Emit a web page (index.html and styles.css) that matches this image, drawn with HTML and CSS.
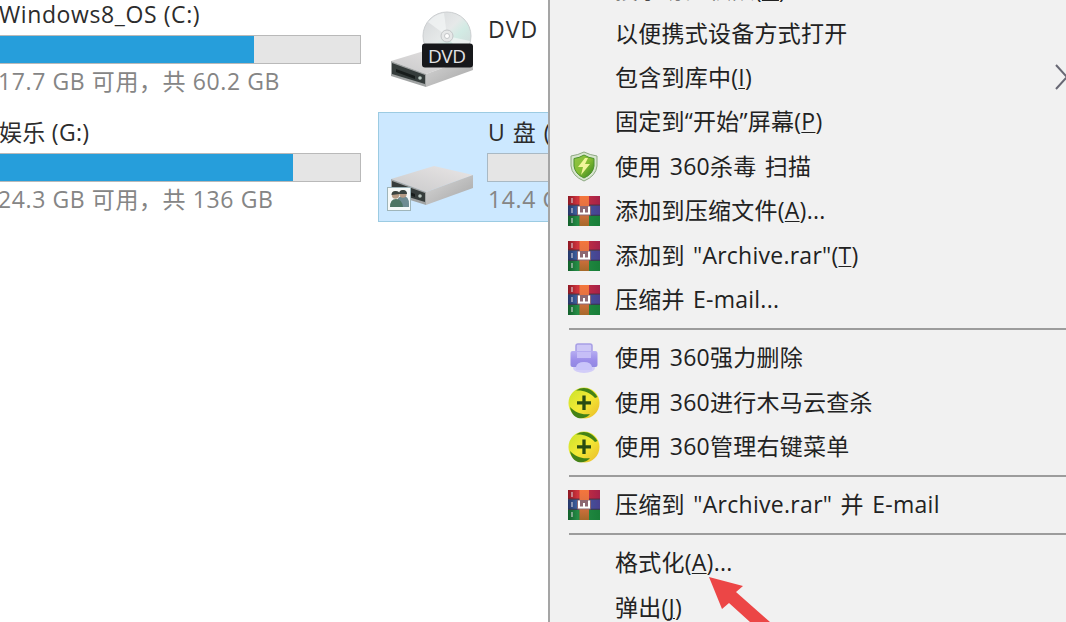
FILE: index.html
```html
<!DOCTYPE html>
<html lang="zh-CN">
<head>
	<meta charset="UTF-8">
	<title>此电脑</title>
	<link rel="stylesheet" href="styles.css">
</head>
<body>
	<!-- 公用图标 -->
	<svg class="defs" width="0" height="0">
		<defs>
			<linearGradient id="side" x1="0" y1="0" x2="1" y2="1">
				<stop offset="0" stop-color="#d8d8d8"/><stop offset="1" stop-color="#a5a5a5"/>
			</linearGradient>
			<linearGradient id="top" x1="0" y1="1" x2="1" y2="0">
				<stop offset="0" stop-color="#c9c9ca"/><stop offset="1" stop-color="#e9e6e6"/>
			</linearGradient>
			<linearGradient id="disc" x1="0" y1="0" x2="1" y2="1">
				<stop offset="0" stop-color="#d3d5d8"/><stop offset=".45" stop-color="#e6e9e9"/><stop offset=".6" stop-color="#d2ebe4"/><stop offset="1" stop-color="#d0d2d5"/>
			</linearGradient>
			<linearGradient id="red" x1="0" x2="1"><stop offset="0" stop-color="#8e1824"/><stop offset=".3" stop-color="#d0353d"/><stop offset="1" stop-color="#a52149"/></linearGradient>
			<linearGradient id="blue" x1="0" x2="1"><stop offset="0" stop-color="#253768"/><stop offset=".3" stop-color="#3f63a4"/><stop offset="1" stop-color="#49408f"/></linearGradient>
			<linearGradient id="green" x1="0" x2="1"><stop offset="0" stop-color="#12602b"/><stop offset=".3" stop-color="#258d46"/><stop offset="1" stop-color="#187e38"/></linearGradient>
			<linearGradient id="strap" x1="0" y1="0" x2="0" y2="1"><stop offset="0" stop-color="#f4763c"/><stop offset=".5" stop-color="#dd7043"/><stop offset="1" stop-color="#a5692a"/></linearGradient>
			<linearGradient id="shield" x1="0" x2="1" y2="1"><stop offset="0" stop-color="#8fc448"/><stop offset=".5" stop-color="#86bd32"/><stop offset="1" stop-color="#2f7f1d"/></linearGradient>
			<linearGradient id="ball" x1="0" x2="1" y2="1"><stop offset="0" stop-color="#c5e22b"/><stop offset=".5" stop-color="#f4ea35"/><stop offset="1" stop-color="#eab829"/></linearGradient>
			<linearGradient id="violet" x1="0" x2="0" y2="1"><stop offset="0" stop-color="#b7aef2"/><stop offset=".6" stop-color="#9a8ce9"/><stop offset="1" stop-color="#9188e2"/></linearGradient>
			<symbol id="drive" viewBox="0 0 82 40">
				<path d="M0 13 43 0 82 9 35 26z" fill="url(#top)"/>
				<path d="M35 26 82 9V22L35 39z" fill="url(#side)"/>
				<path d="M0 13 35 26V39L0 28z" fill="#a0a3a3"/>
				<path d="M1 15 34 27V36L1 26z" fill="#353c3b"/>
				<path d="M5 21 24 28v3L5 24z" fill="#171c1b"/>
				<circle cx="29" cy="30" r="1.8" fill="#b8c6c0"/>
			</symbol>
			<symbol id="rar" viewBox="0 0 32 30">
				<rect width="32" height="9.5" fill="url(#red)"/>
				<rect y="9.5" width="32" height="10" fill="url(#blue)"/>
				<rect y="19.5" width="32" height="10.5" fill="url(#green)"/>
				<path d="M0 9.2H32M0 19.3H32" stroke="#302c42" stroke-width="1"/>
				<path d="M4 2v5M4 12v5M4 22v5" stroke="#dfdbe0" stroke-width="1.3" opacity=".8"/>
				<rect x="11.5" width="9.5" height="30" fill="url(#strap)"/>
				<rect x="9" y="10" width="14" height="9.500" rx="1" fill="#8d6872"/>
				<path d="M11 10.500v8M21 10.500v8M16 13v5.500M11 17.500h10" fill="none" stroke="#fff" stroke-width="2"/>
			</symbol>
			<symbol id="safe" viewBox="0 0 32 32">
				<circle cx="16" cy="16" r="15.5" fill="url(#ball)"/>
				<path d="M8 3.5C15-1 24 .5 29.5 10L27 11C21 4.500 15 3 8 3.500z" fill="#438216"/>
				<path d="M2 20c6 6 12 8 20 7-3 4-8 5-12 4C6 29.500 3 26 2 20z" fill="#438216"/>
				<path d="M16 8.500V23M9 15.800h14" stroke="#294c12" stroke-width="3.300"/>
			</symbol>
		</defs>
	</svg>

	<div class="window">
		<div class="drives">
			<div class="drive">
				<p class="name name_c">Windows8_OS (C:)</p>
				<div class="bar"><div class="used" style="width:70.6%"></div></div>
				<p class="info">17.7 GB 可用，共 60.2 GB</p>
			</div>
			<div class="drive">
				<p class="name name_g">娱乐 (G:)</p>
				<div class="bar"><div class="used" style="width:81.3%"></div></div>
				<p class="info">24.3 GB 可用，共 136 GB</p>
			</div>
		</div>
		<div class="devices">
			<div class="device dvd">
				<svg class="pic" width="84" height="78" viewBox="0 0 84 78">
					<use href="#drive" y="37" width="82" height="40"/>
					<circle cx="56" cy="25" r="24" fill="url(#disc)" stroke="#cccfd1"/>
					<path d="M56 25 37 11Q44 3 53 2zM56 25 79 30Q77 38 70 44z" fill="#f4f6f6" opacity=".7"/>
					<circle cx="56" cy="25" r="6" fill="#e6e8e8" stroke="#c3c6c8"/>
					<circle cx="56" cy="25" r="2.500" fill="#fff" stroke="#c3c6c8"/>
					<rect x="31" y="32.500" width="51" height="24" rx="3" fill="#17181b"/>
					<text class="dvd_text" x="56" y="52" text-anchor="middle" textLength="38">DVD</text>
				</svg>
				<p class="name">DVD</p>
			</div>
			<div class="device usb">
				<svg class="pic" width="88" height="46" viewBox="0 0 88 46">
					<use href="#drive" x="4" width="82" height="40"/>
					<rect x=".5" y="21.500" width="23" height="23" fill="#f5f9f8" stroke="#9fb5ba"/>
					<path d="M10 37q0-7 6-7t6 8v3H10z" fill="#6f8c92"/>
					<path d="M3 41q0-8 6-8t7 8z" fill="#4d7563"/>
					<circle cx="8.500" cy="29" r="3.700" fill="#b59c86"/>
					<circle cx="16" cy="28" r="3.700" fill="#b59c86"/>
					<path d="M4.500 29q0-4 4-4t4 3zM12 28q0-4 4-4t4 4z" fill="#39433f"/>
				</svg>
				<div class="detail">
					<p class="name">U 盘 (H:)</p>
					<div class="bar"></div>
					<p class="info">14.4 GB</p>
				</div>
			</div>
		</div>
	</div>

	<!-- 右键菜单 -->
	<ul class="menu">
		<li class="first"><i></i><span>授予访问权限(<u>G</u>)</span></li>
		<li><i></i><span>以便携式设备方式打开</span></li>
		<li><i></i><span>包含到库中(<u>I</u>)</span><svg class="more" width="18" height="26" viewBox="0 0 18 26"><path d="M2 1 13 13 2 25"/></svg></li>
		<li><i></i><span>固定到“开始”屏幕(<u>P</u>)</span></li>
		<li>
			<i><svg width="30" height="31" viewBox="0 0 30 31">
				<path d="M15 1Q21 4 28 5V15Q27 25 15 30Q3 25 2 15V5Q9 4 15 1z" fill="#d9e6cf" stroke="#8ca881"/>
				<path d="M15 4Q20 7 25 7.500V15Q24 23 15 27Q6 23 5 15V7.500Q10 7 15 4z" fill="url(#shield)" stroke="#4f9230"/>
				<path d="M16 7 9 16h5l-2 8 9-11h-5l3-6z" fill="#f2f69b"/>
			</svg></i>
			<span>使用 360杀毒 扫描</span>
		</li>
		<li><i><svg width="32" height="30"><use href="#rar"/></svg></i><span>添加到压缩文件(<u>A</u>)...</span></li>
		<li><i><svg width="32" height="30"><use href="#rar"/></svg></i><span>添加到 "Archive.rar"(<u>T</u>)</span></li>
		<li><i><svg width="32" height="30"><use href="#rar"/></svg></i><span>压缩并 E-mail...</span></li>
		<li class="line"></li>
		<li>
			<i><svg width="30" height="31" viewBox="0 0 30 31">
				<ellipse cx="15" cy="25" rx="11" ry="5" fill="#d2cdf8"/>
				<path d="M7 9V3q0-2 2-2h12q2 0 2 2v6" fill="#cdc7f6" stroke="#a79ee5" stroke-width="1.500"/>
				<rect x="1.500" y="8" width="27" height="16" rx="2" fill="url(#violet)"/>
				<path d="M8 9h14v6H8z" fill="#c6bef7"/>
				<path d="M7 24q1-5 8-5t8 5v3H7z" fill="#c9c4fa"/>
			</svg></i>
			<span>使用 360强力删除</span>
		</li>
		<li><i><svg width="32" height="32"><use href="#safe"/></svg></i><span>使用 360进行木马云查杀</span></li>
		<li><i><svg width="32" height="32"><use href="#safe"/></svg></i><span>使用 360管理右键菜单</span></li>
		<li class="line"></li>
		<li><i><svg width="32" height="30"><use href="#rar"/></svg></i><span class="wide">压缩到 "Archive.rar" 并 E-mail</span></li>
		<li class="line"></li>
		<li><i></i><span>格式化(<u>A</u>)...</span></li>
		<li><i></i><span>弹出(<u>J</u>)</span></li>
	</ul>

	<svg class="arrow" width="70" height="45" viewBox="0 0 70 45"><path d="M0 0 34 9 27 15 61 45H41L20 26 13 32z"/></svg>
</body>
</html>
```

FILE: styles.css
```css
*{
	margin:0;
	padding:0;
	box-sizing:border-box;
}
body{
	position:relative;
	width:1066px;
	height:622px;
	overflow:hidden;
	background:#fff;
	font-family:"Open Sans","Noto Sans CJK SC",sans-serif;
	font-size:23px;
	line-height:30px;
	color:#2c2c2c;
}
.defs{
	position:absolute;
}
.window{
	display:flex;
}
.drives{
	width:378px;
}
.drive{
	height:118px;
}
.name{
	height:29px;
	line-height:28px;
	white-space:nowrap;
}
.name_c{
	margin-left:-1px;
	letter-spacing:0.6px;
}
.name_g{
	margin-left:-1px;
	letter-spacing:0.3px;
}
.bar{
	width:361px;
	height:29px;
	margin:6px 0 2px;
	background:#e5e5e5;
	border:1px solid #b9b9b9;
	border-left:0;
}
.used{
	height:100%;
	background:#269edb;
}
.info{
	margin-left:-2px;
	white-space:nowrap;
	letter-spacing:0.6px;
	color:#858585;
}
.devices{
	width:688px;
}
.device{
	display:flex;
	height:112px;
}
.dvd{
	padding:11px 0 0 13px;
}
.dvd .name{
	margin:4px 0 0 13px;
	letter-spacing:1.1px;
}
.dvd_text{
	font-size:19px;
	fill:#e2e2e4;
}
.usb{
	height:110px;
	padding:5px 0 0 8px;
	background:#cce8ff;
	border:1px solid #9ccbe2;
}
.usb .pic{
	margin-top:48px;
}
.detail{
	margin-left:13px;
}
.detail .name{
	letter-spacing:1px;
}
.detail .bar{
	width:300px;
	margin-left:-1px;
	border:1px solid #a9b9c4;
}
.detail .info{
	margin-left:0;
}
.menu{
	position:absolute;
	top:-33px;
	left:548px;
	width:518px;
	height:655px;
	overflow:hidden;
	list-style:none;
	background:#f1f1f1;
	border-left:2px solid #a5a5a5;
}
.menu li{
	display:flex;
	align-items:center;
	height:44.4px;
	padding-left:18px;
	white-space:nowrap;
	color:#222;
	letter-spacing:0.25px;
	word-spacing:2px;
}
.menu i{
	display:flex;
	justify-content:center;
	width:32px;
	margin-right:15px;
}
.menu span{
	flex:1;
	padding-bottom:2px;
}
.menu .wide{
	letter-spacing:0.3px;
}
.menu .first span{
	padding-bottom:1px;
	letter-spacing:0.3px;
}
.menu u{
	text-decoration-thickness:1px;
	text-underline-offset:2px;
}
.menu .line{
	height:13.8px;
	padding:0;
}
.menu .line:before{
	content:"";
	flex:1;
	height:2px;
	margin-left:19px;
	background:#9c9c9c;
}
.more{
	margin-right:-6px;
	margin-bottom:2px;
	fill:none;
	stroke:#686874;
	stroke-width:2;
}
.arrow{
	position:absolute;
	left:709px;
	top:577px;
	fill:#ec4646;
}
```
